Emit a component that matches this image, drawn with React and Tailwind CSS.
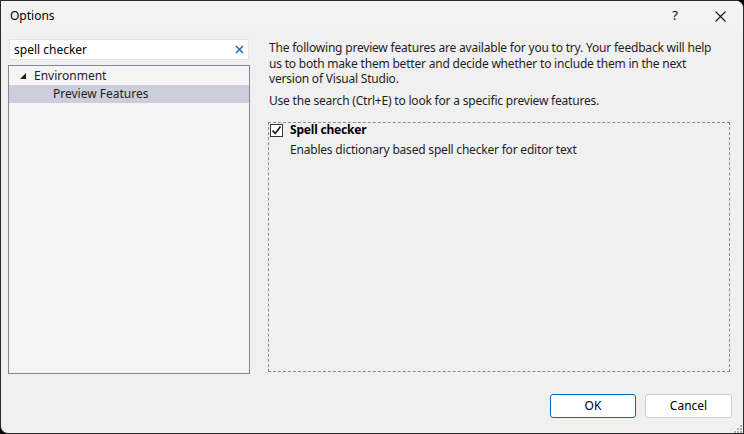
import React, { useState } from 'react';

const font = { fontFamily: '"Segoe UI", "Noto Sans", sans-serif' };

const App = () => {
    const [query, setQuery] = useState('spell checker');
    const [checked, setChecked] = useState(true);

    return (
        <div className="w-[744px] h-[434px] bg-black" style={font}>
            <div className="w-full h-full flex flex-col bg-[#f0f0f0] border border-[#2b2b2b] rounded-tr-[8px] rounded-bl-[8px] overflow-hidden text-[12px] text-[#1e1e1e] font-['Noto_Sans',sans-serif]">
                {/* title bar */}
                <div className="h-[30px] shrink-0 bg-[#f3f3f3] flex items-center pl-[9px]">
                    <span className="text-[12px] text-black">Options</span>
                    <div className="ml-auto flex items-center">
                        <button className="w-[44px] h-[30px] flex items-center justify-center text-[13px] text-black">?</button>
                        <button className="w-[46px] h-[30px] flex items-center justify-center">
                            <svg width="11" height="11" viewBox="0 0 11 11" stroke="#1a1a1a" strokeWidth="1.1">
                                <path d="M0.5 0.5 L10.5 10.5 M10.5 0.5 L0.5 10.5" />
                            </svg>
                        </button>
                    </div>
                </div>

                {/* body */}
                <div className="flex-1 flex px-[7px] pt-[8px] gap-[18px]">
                    {/* left */}
                    <div className="w-[242px] flex flex-col gap-[5px]">
                        <div className="h-[21px] mx-[1px] bg-white border border-[#e3e3e3] flex items-center pl-[4px] pr-[4px]">
                            <input
                                value={query}
                                onChange={(e) => setQuery(e.target.value)}
                                className="flex-1 bg-transparent outline-none text-[12px] text-black"
                            />
                            <svg width="9" height="9" viewBox="0 0 9 9" stroke="#1a6fc9" strokeWidth="1.6">
                                <path d="M1 1 L8 8 M8 1 L1 8" />
                            </svg>
                        </div>
                        <div className="h-[309px] bg-[#f5f5f5] border border-[#868695] pt-[1px]">
                            <div className="h-[18px] flex items-center pl-[10px]">
                                <svg width="8" height="8" viewBox="0 0 8 8" className="mr-[7px]">
                                    <path d="M7 1 L7 7 L1 7 Z" fill="#1e1e1e" />
                                </svg>
                                <span>Environment</span>
                            </div>
                            <div className="h-[18px] flex items-center pl-[44px] bg-[#cccedb]">
                                <span>Preview Features</span>
                            </div>
                        </div>
                    </div>

                    {/* right */}
                    <div className="flex-1 flex flex-col pr-[6px] tracking-[-0.2px]">
                        <p className="pl-[1px] leading-[15.5px] pt-[1px]">
                            The following preview features are available for you to try. Your feedback will help<br />
                            us to both make them better and decide whether to include them in the next<br />
                            version of Visual Studio.
                        </p>
                        <p className="pl-[1px] mt-[6px] leading-[15.5px]">
                            Use the search (Ctrl+E) to look for a specific preview features.
                        </p>
                        <div className="mt-[14px] h-[250px] border border-dashed border-[#8a8a8a] pl-[1px]">
                            <label className="flex items-center h-[14px] gap-[7px] cursor-default">
                                <span
                                    onClick={() => setChecked(!checked)}
                                    className="w-[13px] h-[13px] border border-[#333] bg-white flex items-center justify-center"
                                >
                                    {checked && (
                                        <svg width="11" height="11" viewBox="0 0 11 11">
                                            <path d="M1.5 5.5 L4.2 8.5 L9.5 1.5" fill="none" stroke="#1e1e1e" strokeWidth="1.7" />
                                        </svg>
                                    )}
                                </span>
                                <span className="font-bold text-black">Spell checker</span>
                            </label>
                            <div className="pl-[20px] mt-[4px]">Enables dictionary based spell checker for editor text</div>
                        </div>
                    </div>
                </div>

                {/* footer */}
                <div className="h-[60px] shrink-0 flex items-start justify-end gap-[9px] pt-[20px] pr-[11px] relative">
                    <button className="w-[86px] h-[24px] bg-white border border-[#0067c0] rounded-[3px] text-[12px] text-black">OK</button>
                    <button className="w-[87px] h-[24px] bg-white border border-[#cfcfcf] rounded-[3px] text-[12px] text-black">Cancel</button>
                    <svg width="8" height="8" viewBox="0 0 8 8" className="absolute right-[1px] bottom-[1px]" fill="#b0b0b0">
                        <rect x="6" y="0" width="2" height="2" />
                        <rect x="3" y="3" width="2" height="2" />
                        <rect x="6" y="3" width="2" height="2" />
                        <rect x="0" y="6" width="2" height="2" />
                        <rect x="3" y="6" width="2" height="2" />
                        <rect x="6" y="6" width="2" height="2" />
                    </svg>
                </div>
            </div>
        </div>
    );
};

export default App;
